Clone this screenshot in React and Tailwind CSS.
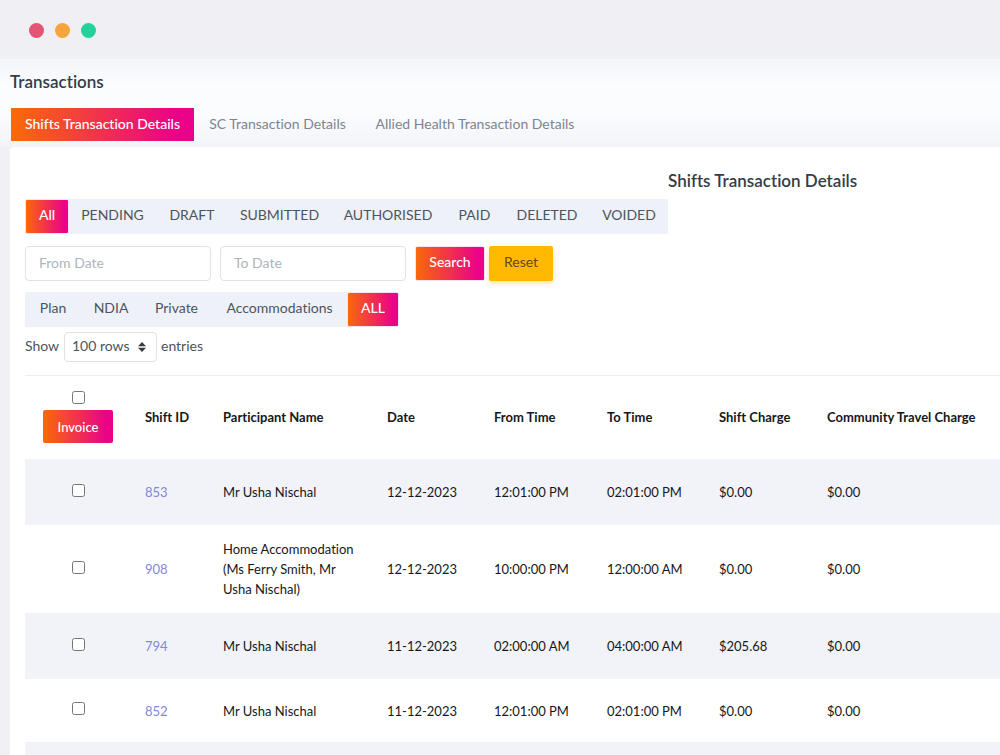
import React, { useState } from 'react';

const tabs = [
  { name: 'Shifts Transaction Details', width: 'w-[183px]' },
  { name: 'SC Transaction Details', width: 'w-[167px]' },
  { name: 'Allied Health Transaction Details', width: 'w-[228px]' },
];

const statuses = [
  { name: 'All', width: 'w-[44px]' },
  { name: 'PENDING', width: 'w-[87px]' },
  { name: 'DRAFT', width: 'w-[72px]' },
  { name: 'SUBMITTED', width: 'w-[103px]' },
  { name: 'AUTHORISED', width: 'w-[114px]' },
  { name: 'PAID', width: 'w-[59px]' },
  { name: 'DELETED', width: 'w-[86px]' },
  { name: 'VOIDED', width: 'w-[78px]' },
];

const plans = [
  { name: 'Plan', width: 'w-[56px]' },
  { name: 'NDIA', width: 'w-[60px]' },
  { name: 'Private', width: 'w-[71px]' },
  { name: 'Accommodations', width: 'w-[135px]' },
  { name: 'ALL', width: 'w-[52px]' },
];

const headings = ['Shift ID', 'Participant Name', 'Date', 'From Time', 'To Time', 'Shift Charge', 'Community Travel Charge'];

const shifts = [
  { id: 853, name: 'Mr Usha Nischal', date: '12-12-2023', from: '12:01:00 PM', to: '02:01:00 PM', charge: '$0.00', travel: '$0.00', height: 'h-[66px]' },
  { id: 908, name: 'Home Accommodation (Ms Ferry Smith, Mr Usha Nischal)', date: '12-12-2023', from: '10:00:00 PM', to: '12:00:00 AM', charge: '$0.00', travel: '$0.00', height: 'h-[88px]' },
  { id: 794, name: 'Mr Usha Nischal', date: '11-12-2023', from: '02:00:00 AM', to: '04:00:00 AM', charge: '$205.68', travel: '$0.00', height: 'h-[66px]' },
  { id: 852, name: 'Mr Usha Nischal', date: '11-12-2023', from: '12:01:00 PM', to: '02:01:00 PM', charge: '$0.00', travel: '$0.00', height: 'h-[63px]' },
];

const active = 'bg-[linear-gradient(to_right,#fa6a07,#ea0288_90%)] bg-origin-border text-white font-medium';

function FilterBar({ items, value, onChange }) {
  return (
    <div className="flex h-[35px] shrink-0 rounded-xs bg-[#eef1f8]">
      {items.map(item => (
        <button
          key={item.name}
          onClick={() => onChange(item.name)}
          className={`${item.width} whitespace-nowrap rounded-xs pb-1 text-center ${
            value === item.name ? `${active} border border-[#f3e3f0]` : 'text-[#4b5560]'
          }`}
        >
          {item.name}
        </button>
      ))}
    </div>
  );
}

function App() {
  const [tab, setTab] = useState(tabs[0].name);
  const [status, setStatus] = useState('All');
  const [plan, setPlan] = useState('ALL');
  const [selected, setSelected] = useState([]);

  const toggle = id => {
    setSelected(selected.includes(id) ? selected.filter(s => s !== id) : [...selected, id]);
  };

  const toggleAll = () => {
    setSelected(selected.length === shifts.length ? [] : shifts.map(s => s.id));
  };

  return (
    <div className="min-h-screen overflow-hidden bg-[#f0f0f5] font-['Lato',sans-serif] text-[14px] leading-5 text-[#4b5560] [font-variant-ligatures:none]">
      {/* Window bar */}
      <div className="flex h-[59px] items-center gap-[11px] bg-[#f0eff4] pl-[29px] pt-[2px]">
        <span className="size-[15px] rounded-full bg-[#e35373]" />
        <span className="size-[15px] rounded-full bg-[#f5a63a]" />
        <span className="size-[15px] rounded-full bg-[#24d199]" />
      </div>

      {/* Page heading and tabs */}
      <header className="h-[88px] bg-[linear-gradient(#f4f5fa,#fbfcfe_30%,#fbfcfe_60%,#f3f4f9)] pl-[10px] pt-[11px]">
        <h1 className="text-[17px] font-semibold leading-6 text-[#343d46]">Transactions</h1>
        <nav className="mt-[14px] flex pl-px">
          {tabs.map(item => (
            <button
              key={item.name}
              onClick={() => setTab(item.name)}
              className={`${item.width} h-[33px] whitespace-nowrap pb-[2px] text-center ${
                tab === item.name ? active : 'text-[#7c858e]'
              }`}
            >
              {item.name}
            </button>
          ))}
        </nav>
      </header>

      <main className="ml-[10px] rounded-tl-sm bg-white pl-[15px]">
        {/* Filters */}
        <div className="flex pt-[22px]">
          <div className="mt-[30px]">
            <FilterBar items={statuses} value={status} onChange={setStatus} />
          </div>
          <h2 className="whitespace-nowrap text-[17px] font-semibold leading-6 text-[#343d46]">Shifts Transaction Details</h2>
        </div>

        <form className="mt-3 flex h-[35px]" onSubmit={e => e.preventDefault()}>
          <input
            type="text"
            aria-label="From Date"
            placeholder="From Date"
            className="w-[186px] rounded-sm border border-[#dfe2e6] px-[13px] pb-[2px] placeholder:text-[#adb5bd]"
          />
          <input
            type="text"
            aria-label="To Date"
            placeholder="To Date"
            className="ml-[9px] w-[186px] rounded-sm border border-[#dfe2e6] px-[13px] pb-[2px] placeholder:text-[#adb5bd]"
          />
          <button type="submit" className={`ml-[9px] w-[70px] rounded-xs border border-[#f3e3f0] pb-1 ${active}`}>
            Search
          </button>
          <button type="reset" className="ml-1 w-[64px] rounded-xs bg-[#ffba00] pb-1 text-[#5b4a1f] shadow-[0_2px_5px_rgba(255,186,0,0.45)]">
            Reset
          </button>
        </form>

        <div className="mt-[11px] flex">
          <FilterBar items={plans} value={plan} onChange={setPlan} />
        </div>

        <div className="mt-[5px] flex h-[30px] items-center">
          <label htmlFor="rows" className="w-[39px] pb-[2px]">Show</label>
          <div className="relative">
            <select id="rows" className="h-[30px] w-[93px] appearance-none rounded-sm border border-[#dfe2e6] bg-white pb-[2px] pl-[7px]">
              <option>100 rows</option>
            </select>
            <svg viewBox="0 0 8 10" className="pointer-events-none absolute right-[11px] top-[10px] h-[10px] w-2 fill-[#343a40]">
              <path d="M4 0 8 4.3H0zM4 10 0 5.7h8z" />
            </svg>
          </div>
          <span className="ml-1 pb-[2px]">entries</span>
        </div>

        {/* Shifts */}
        <table className="mt-[13px] w-full table-fixed border-t border-[#eceef2] text-left text-[13px] text-[#15181b]">
          <colgroup>
            <col className="w-[106px]" />
            <col className="w-[78px]" />
            <col className="w-[164px]" />
            <col className="w-[107px]" />
            <col className="w-[113px]" />
            <col className="w-[112px]" />
            <col className="w-[108px]" />
            <col />
          </colgroup>
          <thead>
            <tr className="h-[83px]">
              <th>
                <div className="flex flex-col items-center gap-[6px]">
                  <input
                    type="checkbox"
                    aria-label="Select all shifts"
                    checked={selected.length === shifts.length}
                    onChange={toggleAll}
                    className="size-[13px]"
                  />
                  <button className={`h-[33px] w-[70px] rounded-xs ${active}`}>Invoice</button>
                </div>
              </th>
              {headings.map(heading => (
                <th key={heading} className="whitespace-nowrap pl-[14px] font-bold">{heading}</th>
              ))}
            </tr>
          </thead>
          <tbody>
            {shifts.map(shift => (
              <tr key={shift.id} className={`${shift.height} odd:bg-[#f1f3f8]`}>
                <td className="text-center">
                  <input
                    type="checkbox"
                    aria-label={`Select shift ${shift.id}`}
                    checked={selected.includes(shift.id)}
                    onChange={() => toggle(shift.id)}
                    className="size-[13px]"
                  />
                </td>
                <td className="pl-[14px] pt-px"><a href={`#${shift.id}`} className="text-[#7f87e0]">{shift.id}</a></td>
                <td className="px-[14px] pt-px">{shift.name}</td>
                <td className="pl-[14px] pt-px">{shift.date}</td>
                <td className="pl-[14px] pt-px">{shift.from}</td>
                <td className="pl-[14px] pt-px">{shift.to}</td>
                <td className="pl-[14px] pt-px">{shift.charge}</td>
                <td className="pl-[14px] pt-px">{shift.travel}</td>
              </tr>
            ))}
            <tr className="h-[13px] odd:bg-[#f1f3f8]">
              <td colSpan={8} />
            </tr>
          </tbody>
        </table>
      </main>
    </div>
  );
}

export default App;
